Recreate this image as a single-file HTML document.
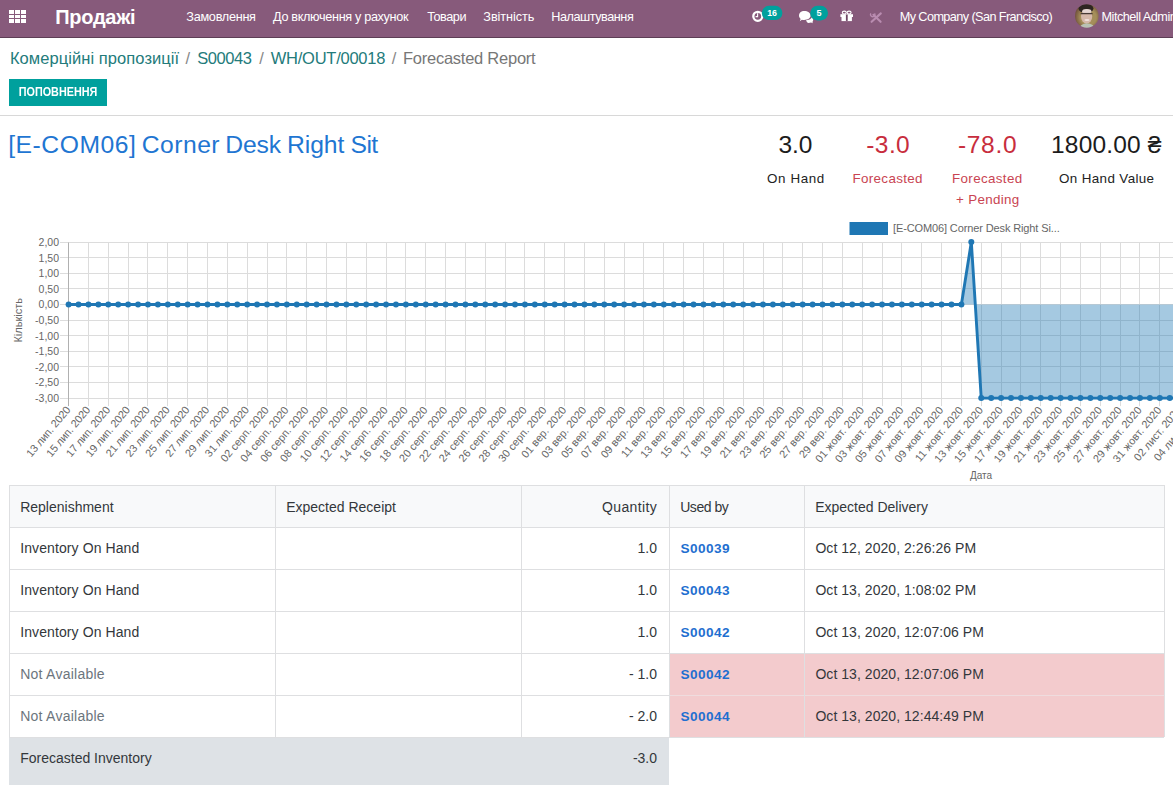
<!DOCTYPE html>
<html><head><meta charset="utf-8">
<style>
*{box-sizing:border-box;margin:0;padding:0}
html,body{width:1173px;height:785px;overflow:hidden;background:#fff;font-family:"Liberation Sans",sans-serif}
.t{position:absolute;white-space:nowrap}
.r{position:absolute}
</style></head><body>
<div class="r" style="left:0px;top:0px;width:1173px;height:37px;background:#875A7B;"></div>
<div class="r" style="left:0px;top:37px;width:1173px;height:1px;background:#5d3e55;"></div>
<div class="r" style="left:9.0px;top:10.3px;width:5.2px;height:3.8px;background:#fff;"></div>
<div class="r" style="left:14.8px;top:10.3px;width:5.2px;height:3.8px;background:#fff;"></div>
<div class="r" style="left:20.6px;top:10.3px;width:5.2px;height:3.8px;background:#fff;"></div>
<div class="r" style="left:9.0px;top:14.600000000000001px;width:5.2px;height:3.8px;background:#fff;"></div>
<div class="r" style="left:14.8px;top:14.600000000000001px;width:5.2px;height:3.8px;background:#fff;"></div>
<div class="r" style="left:20.6px;top:14.600000000000001px;width:5.2px;height:3.8px;background:#fff;"></div>
<div class="r" style="left:9.0px;top:18.9px;width:5.2px;height:3.8px;background:#fff;"></div>
<div class="r" style="left:14.8px;top:18.9px;width:5.2px;height:3.8px;background:#fff;"></div>
<div class="r" style="left:20.6px;top:18.9px;width:5.2px;height:3.8px;background:#fff;"></div>
<div class="t" style="top:6.60px;font-size:20px;line-height:20px;color:#fff;font-weight:bold;letter-spacing:-0.3px;left:55.30px;">Продажі</div>
<div class="t" style="top:11.31px;font-size:12.7px;line-height:12.7px;color:#fff;letter-spacing:-0.289px;left:186.30px;">Замовлення</div>
<div class="t" style="top:11.31px;font-size:12.7px;line-height:12.7px;color:#fff;letter-spacing:-0.343px;left:273.00px;">До включення у рахунок</div>
<div class="t" style="top:11.31px;font-size:12.7px;line-height:12.7px;color:#fff;letter-spacing:-0.46px;left:427.20px;">Товари</div>
<div class="t" style="top:11.31px;font-size:12.7px;line-height:12.7px;color:#fff;letter-spacing:-0.062px;left:483.30px;">Звітність</div>
<div class="t" style="top:11.31px;font-size:12.7px;line-height:12.7px;color:#fff;letter-spacing:-0.464px;left:551.20px;">Налаштування</div>
<div class="t" style="top:11.31px;font-size:12.7px;line-height:12.7px;color:#fff;letter-spacing:-0.592px;left:899.70px;">My Company (San Francisco)</div>
<div class="t" style="top:11.31px;font-size:12.7px;line-height:12.7px;color:#fff;letter-spacing:-0.5px;left:1101.50px;">Mitchell Admin</div>
<svg class="r" style="left:0;top:0" width="1173" height="38" viewBox="0 0 1173 38">
<circle cx="757.8" cy="16.3" r="4.5" fill="none" stroke="#fff" stroke-width="2.3"/>
<path d="M757.6,13.3 V16.6 H755.6" fill="none" stroke="#fff" stroke-width="1.1"/>
<rect x="761.8" y="5.8" width="20.6" height="14.2" rx="7.1" fill="#00A09D"/>
<text x="772.1" y="15.9" text-anchor="middle" font-family="Liberation Sans" font-weight="bold" font-size="8.8" fill="#fff">16</text>
<path d="M804.2,11 C807.8,11 810.6,13 810.6,15.6 C810.6,18.2 807.8,20 804.2,20 C803.3,20 802.6,19.9 801.9,19.7 L799.8,21.2 L800.6,18.9 C799.5,18 799,16.9 799,15.6 C799,13 801.1,11 804.2,11 Z" fill="#fff"/>
<path d="M806,20.3 C808.5,20.3 811,19 812,17.2 C812.8,18 813.2,19 813.2,20 C813.2,20.9 812.8,21.6 812.3,22.1 L813,23.2 L811,22.6 C810.3,22.9 809.5,23 808.6,23 C807.5,23 806.6,21.8 806,20.3 Z" fill="#fff"/>
<rect x="810.2" y="5.8" width="17.8" height="14.6" rx="7.3" fill="#00A09D"/>
<text x="819.1" y="16" text-anchor="middle" font-family="Liberation Sans" font-weight="bold" font-size="9" fill="#fff">5</text>
<ellipse cx="844.3" cy="12.6" rx="2" ry="1.5" fill="none" stroke="#fff" stroke-width="1.1"/>
<ellipse cx="849.1" cy="12.6" rx="2" ry="1.5" fill="none" stroke="#fff" stroke-width="1.1"/>
<rect x="840.4" y="14.2" width="12.6" height="2.8" fill="#fff"/>
<rect x="841.5" y="17" width="10.4" height="4.1" fill="#fff"/>
<rect x="845.9" y="14.6" width="1.8" height="6.3" fill="#6d4563"/>
<path d="M871.6,21.8 L880.8,13.4" stroke="#b98cb0" stroke-width="2.1" stroke-linecap="round"/>
<path d="M873.4,14.8 L880.6,21.8" stroke="#b98cb0" stroke-width="2.1" stroke-linecap="round"/>
<path d="M870.8,13.4 A2.2,2.2 0 1 0 874.6,13.4" fill="none" stroke="#b98cb0" stroke-width="1.4"/>
<defs>
<clipPath id="av"><circle cx="1086.8" cy="15.95" r="11.8"/></clipPath>
<radialGradient id="avbg" cx="0.55" cy="0.55" r="0.55"><stop offset="0.55" stop-color="#a58e5a"/><stop offset="1" stop-color="#6a4a38"/></radialGradient>
<filter id="avb" x="-10%" y="-10%" width="120%" height="120%"><feGaussianBlur stdDeviation="0.55"/></filter>
</defs>
<g clip-path="url(#av)"><g filter="url(#avb)">
<rect x="1074" y="3" width="26" height="26" fill="url(#avbg)"/>
<ellipse cx="1086" cy="8.5" rx="7.5" ry="4.5" fill="#2e2522"/>
<ellipse cx="1086.6" cy="16.5" rx="5.6" ry="7.2" fill="#d6b8aa"/>
<ellipse cx="1086.8" cy="11.2" rx="4.6" ry="2.2" fill="#e6d6d2"/>
<path d="M1080.6,13.6 H1092.6" stroke="#4a3a34" stroke-width="1.3"/>
<ellipse cx="1087" cy="20" rx="2.6" ry="1.1" fill="#f0e0dc"/>
<path d="M1079,29 C1080,25 1083,23.6 1087,23.6 C1091,23.6 1094,25 1095,29 Z" fill="#b9c2b4"/>
</g></g>
</svg>
<div class="t" style="top:49.98px;font-size:16.5px;line-height:16.5px;color:#237b7b;letter-spacing:0.07px;left:9.90px;">Комерційні пропозиції</div>
<div class="t" style="top:49.98px;font-size:16.5px;line-height:16.5px;color:#888;left:185.50px;">/</div>
<div class="t" style="top:49.98px;font-size:16.5px;line-height:16.5px;color:#237b7b;letter-spacing:-0.44px;left:197.20px;">S00043</div>
<div class="t" style="top:49.98px;font-size:16.5px;line-height:16.5px;color:#888;left:259.20px;">/</div>
<div class="t" style="top:49.98px;font-size:16.5px;line-height:16.5px;color:#237b7b;letter-spacing:-0.255px;left:270.80px;">WH/OUT/00018</div>
<div class="t" style="top:49.98px;font-size:16.5px;line-height:16.5px;color:#888;left:391.70px;">/</div>
<div class="t" style="top:49.98px;font-size:16.5px;line-height:16.5px;color:#777;letter-spacing:-0.25px;left:403.00px;">Forecasted Report</div>
<div class="r" style="left:9px;top:79px;width:98px;height:27px;background:#00A09D;"></div>
<div class="t" style="top:84.98px;font-size:13.2px;line-height:13.2px;color:#fff;font-weight:bold;left:-241.90px;width:600px;text-align:center;transform:scaleX(0.82);">ПОПОВНЕННЯ</div>
<div class="r" style="left:0px;top:115px;width:1173px;height:1px;background:#d8d8d8;"></div>
<div class="t" style="top:132.91px;font-size:24.7px;line-height:24.7px;color:#1f76d2;letter-spacing:0.538px;left:8.20px;">[E-COM06]</div>
<div class="t" style="top:132.91px;font-size:24.7px;line-height:24.7px;color:#1f76d2;letter-spacing:0.46px;left:141.80px;">Corner</div>
<div class="t" style="top:132.91px;font-size:24.7px;line-height:24.7px;color:#1f76d2;letter-spacing:-0.167px;left:225.30px;">Desk</div>
<div class="t" style="top:132.91px;font-size:24.7px;line-height:24.7px;color:#1f76d2;letter-spacing:-0.075px;left:287.00px;">Right</div>
<div class="t" style="top:132.91px;font-size:24.7px;line-height:24.7px;color:#1f76d2;letter-spacing:-0.6px;left:350.60px;">Sit</div>
<div class="t" style="top:132.98px;font-size:24.5px;line-height:24.5px;color:#1c1c1c;letter-spacing:-0.1px;left:778.60px;">3.0</div>
<div class="t" style="top:132.98px;font-size:24.5px;line-height:24.5px;color:#c82d3d;letter-spacing:0.4px;left:866.30px;">-3.0</div>
<div class="t" style="top:132.98px;font-size:24.5px;line-height:24.5px;color:#c82d3d;letter-spacing:0.7px;left:957.90px;">-78.0</div>
<div class="t" style="top:132.98px;font-size:24.5px;line-height:24.5px;color:#1c1c1c;letter-spacing:0.188px;left:1051.00px;">1800.00 ₴</div>
<div class="t" style="top:171.91px;font-size:13.4px;line-height:13.4px;color:#222;letter-spacing:0.6px;left:767.00px;">On Hand</div>
<div class="t" style="top:171.91px;font-size:13.4px;line-height:13.4px;color:#c94452;letter-spacing:0.311px;left:852.60px;">Forecasted</div>
<div class="t" style="top:171.91px;font-size:13.4px;line-height:13.4px;color:#c94452;letter-spacing:0.356px;left:952.00px;">Forecasted</div>
<div class="t" style="top:192.61px;font-size:13.4px;line-height:13.4px;color:#c94452;letter-spacing:0.312px;left:956.00px;">+ Pending</div>
<div class="t" style="top:171.91px;font-size:13.4px;line-height:13.4px;color:#222;letter-spacing:0.375px;left:1059.00px;">On Hand Value</div>
<svg class="r" style="left:0;top:0" width="1173" height="785" viewBox="0 0 1173 785" font-family="Liberation Sans">
<line x1="60" y1="242.50" x2="1200" y2="242.50" stroke="#dcdcdc" stroke-width="1"/>
<line x1="60" y1="257.50" x2="1200" y2="257.50" stroke="#dcdcdc" stroke-width="1"/>
<line x1="60" y1="273.50" x2="1200" y2="273.50" stroke="#dcdcdc" stroke-width="1"/>
<line x1="60" y1="288.50" x2="1200" y2="288.50" stroke="#dcdcdc" stroke-width="1"/>
<line x1="60" y1="304.50" x2="1200" y2="304.50" stroke="#dcdcdc" stroke-width="1"/>
<line x1="60" y1="320.50" x2="1200" y2="320.50" stroke="#dcdcdc" stroke-width="1"/>
<line x1="60" y1="335.50" x2="1200" y2="335.50" stroke="#dcdcdc" stroke-width="1"/>
<line x1="60" y1="351.50" x2="1200" y2="351.50" stroke="#dcdcdc" stroke-width="1"/>
<line x1="60" y1="366.50" x2="1200" y2="366.50" stroke="#dcdcdc" stroke-width="1"/>
<line x1="60" y1="382.50" x2="1200" y2="382.50" stroke="#dcdcdc" stroke-width="1"/>
<line x1="60" y1="398.50" x2="1200" y2="398.50" stroke="#dcdcdc" stroke-width="1"/>
<line x1="68.50" y1="242.50" x2="68.50" y2="406.10" stroke="#b0b0b0" stroke-width="1"/>
<line x1="88.50" y1="242.50" x2="88.50" y2="406.10" stroke="#dcdcdc" stroke-width="1"/>
<line x1="108.50" y1="242.50" x2="108.50" y2="406.10" stroke="#dcdcdc" stroke-width="1"/>
<line x1="128.50" y1="242.50" x2="128.50" y2="406.10" stroke="#dcdcdc" stroke-width="1"/>
<line x1="147.50" y1="242.50" x2="147.50" y2="406.10" stroke="#dcdcdc" stroke-width="1"/>
<line x1="167.50" y1="242.50" x2="167.50" y2="406.10" stroke="#dcdcdc" stroke-width="1"/>
<line x1="187.50" y1="242.50" x2="187.50" y2="406.10" stroke="#dcdcdc" stroke-width="1"/>
<line x1="207.50" y1="242.50" x2="207.50" y2="406.10" stroke="#dcdcdc" stroke-width="1"/>
<line x1="227.50" y1="242.50" x2="227.50" y2="406.10" stroke="#dcdcdc" stroke-width="1"/>
<line x1="247.50" y1="242.50" x2="247.50" y2="406.10" stroke="#dcdcdc" stroke-width="1"/>
<line x1="267.50" y1="242.50" x2="267.50" y2="406.10" stroke="#dcdcdc" stroke-width="1"/>
<line x1="286.50" y1="242.50" x2="286.50" y2="406.10" stroke="#dcdcdc" stroke-width="1"/>
<line x1="306.50" y1="242.50" x2="306.50" y2="406.10" stroke="#dcdcdc" stroke-width="1"/>
<line x1="326.50" y1="242.50" x2="326.50" y2="406.10" stroke="#dcdcdc" stroke-width="1"/>
<line x1="346.50" y1="242.50" x2="346.50" y2="406.10" stroke="#dcdcdc" stroke-width="1"/>
<line x1="366.50" y1="242.50" x2="366.50" y2="406.10" stroke="#dcdcdc" stroke-width="1"/>
<line x1="386.50" y1="242.50" x2="386.50" y2="406.10" stroke="#dcdcdc" stroke-width="1"/>
<line x1="405.50" y1="242.50" x2="405.50" y2="406.10" stroke="#dcdcdc" stroke-width="1"/>
<line x1="425.50" y1="242.50" x2="425.50" y2="406.10" stroke="#dcdcdc" stroke-width="1"/>
<line x1="445.50" y1="242.50" x2="445.50" y2="406.10" stroke="#dcdcdc" stroke-width="1"/>
<line x1="465.50" y1="242.50" x2="465.50" y2="406.10" stroke="#dcdcdc" stroke-width="1"/>
<line x1="485.50" y1="242.50" x2="485.50" y2="406.10" stroke="#dcdcdc" stroke-width="1"/>
<line x1="505.50" y1="242.50" x2="505.50" y2="406.10" stroke="#dcdcdc" stroke-width="1"/>
<line x1="524.50" y1="242.50" x2="524.50" y2="406.10" stroke="#dcdcdc" stroke-width="1"/>
<line x1="544.50" y1="242.50" x2="544.50" y2="406.10" stroke="#dcdcdc" stroke-width="1"/>
<line x1="564.50" y1="242.50" x2="564.50" y2="406.10" stroke="#dcdcdc" stroke-width="1"/>
<line x1="584.50" y1="242.50" x2="584.50" y2="406.10" stroke="#dcdcdc" stroke-width="1"/>
<line x1="604.50" y1="242.50" x2="604.50" y2="406.10" stroke="#dcdcdc" stroke-width="1"/>
<line x1="624.50" y1="242.50" x2="624.50" y2="406.10" stroke="#dcdcdc" stroke-width="1"/>
<line x1="643.50" y1="242.50" x2="643.50" y2="406.10" stroke="#dcdcdc" stroke-width="1"/>
<line x1="663.50" y1="242.50" x2="663.50" y2="406.10" stroke="#dcdcdc" stroke-width="1"/>
<line x1="683.50" y1="242.50" x2="683.50" y2="406.10" stroke="#dcdcdc" stroke-width="1"/>
<line x1="703.50" y1="242.50" x2="703.50" y2="406.10" stroke="#dcdcdc" stroke-width="1"/>
<line x1="723.50" y1="242.50" x2="723.50" y2="406.10" stroke="#dcdcdc" stroke-width="1"/>
<line x1="743.50" y1="242.50" x2="743.50" y2="406.10" stroke="#dcdcdc" stroke-width="1"/>
<line x1="763.50" y1="242.50" x2="763.50" y2="406.10" stroke="#dcdcdc" stroke-width="1"/>
<line x1="782.50" y1="242.50" x2="782.50" y2="406.10" stroke="#dcdcdc" stroke-width="1"/>
<line x1="802.50" y1="242.50" x2="802.50" y2="406.10" stroke="#dcdcdc" stroke-width="1"/>
<line x1="822.50" y1="242.50" x2="822.50" y2="406.10" stroke="#dcdcdc" stroke-width="1"/>
<line x1="842.50" y1="242.50" x2="842.50" y2="406.10" stroke="#dcdcdc" stroke-width="1"/>
<line x1="862.50" y1="242.50" x2="862.50" y2="406.10" stroke="#dcdcdc" stroke-width="1"/>
<line x1="882.50" y1="242.50" x2="882.50" y2="406.10" stroke="#dcdcdc" stroke-width="1"/>
<line x1="901.50" y1="242.50" x2="901.50" y2="406.10" stroke="#dcdcdc" stroke-width="1"/>
<line x1="921.50" y1="242.50" x2="921.50" y2="406.10" stroke="#dcdcdc" stroke-width="1"/>
<line x1="941.50" y1="242.50" x2="941.50" y2="406.10" stroke="#dcdcdc" stroke-width="1"/>
<line x1="961.50" y1="242.50" x2="961.50" y2="406.10" stroke="#dcdcdc" stroke-width="1"/>
<line x1="981.50" y1="242.50" x2="981.50" y2="406.10" stroke="#dcdcdc" stroke-width="1"/>
<line x1="1001.50" y1="242.50" x2="1001.50" y2="406.10" stroke="#dcdcdc" stroke-width="1"/>
<line x1="1020.50" y1="242.50" x2="1020.50" y2="406.10" stroke="#dcdcdc" stroke-width="1"/>
<line x1="1040.50" y1="242.50" x2="1040.50" y2="406.10" stroke="#dcdcdc" stroke-width="1"/>
<line x1="1060.50" y1="242.50" x2="1060.50" y2="406.10" stroke="#dcdcdc" stroke-width="1"/>
<line x1="1080.50" y1="242.50" x2="1080.50" y2="406.10" stroke="#dcdcdc" stroke-width="1"/>
<line x1="1100.50" y1="242.50" x2="1100.50" y2="406.10" stroke="#dcdcdc" stroke-width="1"/>
<line x1="1120.50" y1="242.50" x2="1120.50" y2="406.10" stroke="#dcdcdc" stroke-width="1"/>
<line x1="1139.50" y1="242.50" x2="1139.50" y2="406.10" stroke="#dcdcdc" stroke-width="1"/>
<line x1="1159.50" y1="242.50" x2="1159.50" y2="406.10" stroke="#dcdcdc" stroke-width="1"/>
<line x1="1179.50" y1="242.50" x2="1179.50" y2="406.10" stroke="#dcdcdc" stroke-width="1"/>
<text x="59" y="245.90" text-anchor="end" font-size="10.5" fill="#666">2,00</text>
<text x="59" y="261.50" text-anchor="end" font-size="10.5" fill="#666">1,50</text>
<text x="59" y="277.10" text-anchor="end" font-size="10.5" fill="#666">1,00</text>
<text x="59" y="292.70" text-anchor="end" font-size="10.5" fill="#666">0,50</text>
<text x="59" y="308.30" text-anchor="end" font-size="10.5" fill="#666">0,00</text>
<text x="59" y="323.90" text-anchor="end" font-size="10.5" fill="#666">-0,50</text>
<text x="59" y="339.50" text-anchor="end" font-size="10.5" fill="#666">-1,00</text>
<text x="59" y="355.10" text-anchor="end" font-size="10.5" fill="#666">-1,50</text>
<text x="59" y="370.70" text-anchor="end" font-size="10.5" fill="#666">-2,00</text>
<text x="59" y="386.30" text-anchor="end" font-size="10.5" fill="#666">-2,50</text>
<text x="59" y="401.90" text-anchor="end" font-size="10.5" fill="#666">-3,00</text>
<text transform="translate(68.00,407.8) rotate(-50)" text-anchor="end" y="3.9" font-size="10.8" letter-spacing="-0.12" fill="#666">13 лип. 2020</text>
<text transform="translate(87.84,407.8) rotate(-50)" text-anchor="end" y="3.9" font-size="10.8" letter-spacing="-0.12" fill="#666">15 лип. 2020</text>
<text transform="translate(107.68,407.8) rotate(-50)" text-anchor="end" y="3.9" font-size="10.8" letter-spacing="-0.12" fill="#666">17 лип. 2020</text>
<text transform="translate(127.52,407.8) rotate(-50)" text-anchor="end" y="3.9" font-size="10.8" letter-spacing="-0.12" fill="#666">19 лип. 2020</text>
<text transform="translate(147.36,407.8) rotate(-50)" text-anchor="end" y="3.9" font-size="10.8" letter-spacing="-0.12" fill="#666">21 лип. 2020</text>
<text transform="translate(167.20,407.8) rotate(-50)" text-anchor="end" y="3.9" font-size="10.8" letter-spacing="-0.12" fill="#666">23 лип. 2020</text>
<text transform="translate(187.04,407.8) rotate(-50)" text-anchor="end" y="3.9" font-size="10.8" letter-spacing="-0.12" fill="#666">25 лип. 2020</text>
<text transform="translate(206.88,407.8) rotate(-50)" text-anchor="end" y="3.9" font-size="10.8" letter-spacing="-0.12" fill="#666">27 лип. 2020</text>
<text transform="translate(226.72,407.8) rotate(-50)" text-anchor="end" y="3.9" font-size="10.8" letter-spacing="-0.12" fill="#666">29 лип. 2020</text>
<text transform="translate(246.56,407.8) rotate(-50)" text-anchor="end" y="3.9" font-size="10.8" letter-spacing="-0.12" fill="#666">31 лип. 2020</text>
<text transform="translate(266.40,407.8) rotate(-50)" text-anchor="end" y="3.9" font-size="10.8" letter-spacing="0.0" fill="#666">02 серп. 2020</text>
<text transform="translate(286.24,407.8) rotate(-50)" text-anchor="end" y="3.9" font-size="10.8" letter-spacing="0.0" fill="#666">04 серп. 2020</text>
<text transform="translate(306.08,407.8) rotate(-50)" text-anchor="end" y="3.9" font-size="10.8" letter-spacing="0.0" fill="#666">06 серп. 2020</text>
<text transform="translate(325.92,407.8) rotate(-50)" text-anchor="end" y="3.9" font-size="10.8" letter-spacing="0.0" fill="#666">08 серп. 2020</text>
<text transform="translate(345.76,407.8) rotate(-50)" text-anchor="end" y="3.9" font-size="10.8" letter-spacing="0.0" fill="#666">10 серп. 2020</text>
<text transform="translate(365.60,407.8) rotate(-50)" text-anchor="end" y="3.9" font-size="10.8" letter-spacing="0.0" fill="#666">12 серп. 2020</text>
<text transform="translate(385.44,407.8) rotate(-50)" text-anchor="end" y="3.9" font-size="10.8" letter-spacing="0.0" fill="#666">14 серп. 2020</text>
<text transform="translate(405.28,407.8) rotate(-50)" text-anchor="end" y="3.9" font-size="10.8" letter-spacing="0.0" fill="#666">16 серп. 2020</text>
<text transform="translate(425.12,407.8) rotate(-50)" text-anchor="end" y="3.9" font-size="10.8" letter-spacing="0.0" fill="#666">18 серп. 2020</text>
<text transform="translate(444.96,407.8) rotate(-50)" text-anchor="end" y="3.9" font-size="10.8" letter-spacing="0.0" fill="#666">20 серп. 2020</text>
<text transform="translate(464.80,407.8) rotate(-50)" text-anchor="end" y="3.9" font-size="10.8" letter-spacing="0.0" fill="#666">22 серп. 2020</text>
<text transform="translate(484.64,407.8) rotate(-50)" text-anchor="end" y="3.9" font-size="10.8" letter-spacing="0.0" fill="#666">24 серп. 2020</text>
<text transform="translate(504.48,407.8) rotate(-50)" text-anchor="end" y="3.9" font-size="10.8" letter-spacing="0.0" fill="#666">26 серп. 2020</text>
<text transform="translate(524.32,407.8) rotate(-50)" text-anchor="end" y="3.9" font-size="10.8" letter-spacing="0.0" fill="#666">28 серп. 2020</text>
<text transform="translate(544.16,407.8) rotate(-50)" text-anchor="end" y="3.9" font-size="10.8" letter-spacing="0.0" fill="#666">30 серп. 2020</text>
<text transform="translate(564.00,407.8) rotate(-50)" text-anchor="end" y="3.9" font-size="10.8" letter-spacing="0.05" fill="#666">01 вер. 2020</text>
<text transform="translate(583.84,407.8) rotate(-50)" text-anchor="end" y="3.9" font-size="10.8" letter-spacing="0.05" fill="#666">03 вер. 2020</text>
<text transform="translate(603.68,407.8) rotate(-50)" text-anchor="end" y="3.9" font-size="10.8" letter-spacing="0.05" fill="#666">05 вер. 2020</text>
<text transform="translate(623.52,407.8) rotate(-50)" text-anchor="end" y="3.9" font-size="10.8" letter-spacing="0.05" fill="#666">07 вер. 2020</text>
<text transform="translate(643.36,407.8) rotate(-50)" text-anchor="end" y="3.9" font-size="10.8" letter-spacing="0.05" fill="#666">09 вер. 2020</text>
<text transform="translate(663.20,407.8) rotate(-50)" text-anchor="end" y="3.9" font-size="10.8" letter-spacing="0.05" fill="#666">11 вер. 2020</text>
<text transform="translate(683.04,407.8) rotate(-50)" text-anchor="end" y="3.9" font-size="10.8" letter-spacing="0.05" fill="#666">13 вер. 2020</text>
<text transform="translate(702.88,407.8) rotate(-50)" text-anchor="end" y="3.9" font-size="10.8" letter-spacing="0.05" fill="#666">15 вер. 2020</text>
<text transform="translate(722.72,407.8) rotate(-50)" text-anchor="end" y="3.9" font-size="10.8" letter-spacing="0.05" fill="#666">17 вер. 2020</text>
<text transform="translate(742.56,407.8) rotate(-50)" text-anchor="end" y="3.9" font-size="10.8" letter-spacing="0.05" fill="#666">19 вер. 2020</text>
<text transform="translate(762.40,407.8) rotate(-50)" text-anchor="end" y="3.9" font-size="10.8" letter-spacing="0.05" fill="#666">21 вер. 2020</text>
<text transform="translate(782.24,407.8) rotate(-50)" text-anchor="end" y="3.9" font-size="10.8" letter-spacing="0.05" fill="#666">23 вер. 2020</text>
<text transform="translate(802.08,407.8) rotate(-50)" text-anchor="end" y="3.9" font-size="10.8" letter-spacing="0.05" fill="#666">25 вер. 2020</text>
<text transform="translate(821.92,407.8) rotate(-50)" text-anchor="end" y="3.9" font-size="10.8" letter-spacing="0.05" fill="#666">27 вер. 2020</text>
<text transform="translate(841.76,407.8) rotate(-50)" text-anchor="end" y="3.9" font-size="10.8" letter-spacing="0.05" fill="#666">29 вер. 2020</text>
<text transform="translate(861.60,407.8) rotate(-50)" text-anchor="end" y="3.9" font-size="10.8" letter-spacing="0.12" fill="#666">01 жовт. 2020</text>
<text transform="translate(881.44,407.8) rotate(-50)" text-anchor="end" y="3.9" font-size="10.8" letter-spacing="0.12" fill="#666">03 жовт. 2020</text>
<text transform="translate(901.28,407.8) rotate(-50)" text-anchor="end" y="3.9" font-size="10.8" letter-spacing="0.12" fill="#666">05 жовт. 2020</text>
<text transform="translate(921.12,407.8) rotate(-50)" text-anchor="end" y="3.9" font-size="10.8" letter-spacing="0.12" fill="#666">07 жовт. 2020</text>
<text transform="translate(940.96,407.8) rotate(-50)" text-anchor="end" y="3.9" font-size="10.8" letter-spacing="0.12" fill="#666">09 жовт. 2020</text>
<text transform="translate(960.80,407.8) rotate(-50)" text-anchor="end" y="3.9" font-size="10.8" letter-spacing="0.12" fill="#666">11 жовт. 2020</text>
<text transform="translate(980.64,407.8) rotate(-50)" text-anchor="end" y="3.9" font-size="10.8" letter-spacing="0.12" fill="#666">13 жовт. 2020</text>
<text transform="translate(1000.48,407.8) rotate(-50)" text-anchor="end" y="3.9" font-size="10.8" letter-spacing="0.12" fill="#666">15 жовт. 2020</text>
<text transform="translate(1020.32,407.8) rotate(-50)" text-anchor="end" y="3.9" font-size="10.8" letter-spacing="0.12" fill="#666">17 жовт. 2020</text>
<text transform="translate(1040.16,407.8) rotate(-50)" text-anchor="end" y="3.9" font-size="10.8" letter-spacing="0.12" fill="#666">19 жовт. 2020</text>
<text transform="translate(1060.00,407.8) rotate(-50)" text-anchor="end" y="3.9" font-size="10.8" letter-spacing="0.12" fill="#666">21 жовт. 2020</text>
<text transform="translate(1079.84,407.8) rotate(-50)" text-anchor="end" y="3.9" font-size="10.8" letter-spacing="0.12" fill="#666">23 жовт. 2020</text>
<text transform="translate(1099.68,407.8) rotate(-50)" text-anchor="end" y="3.9" font-size="10.8" letter-spacing="0.12" fill="#666">25 жовт. 2020</text>
<text transform="translate(1119.52,407.8) rotate(-50)" text-anchor="end" y="3.9" font-size="10.8" letter-spacing="0.12" fill="#666">27 жовт. 2020</text>
<text transform="translate(1139.36,407.8) rotate(-50)" text-anchor="end" y="3.9" font-size="10.8" letter-spacing="0.12" fill="#666">29 жовт. 2020</text>
<text transform="translate(1159.20,407.8) rotate(-50)" text-anchor="end" y="3.9" font-size="10.8" letter-spacing="0.12" fill="#666">31 жовт. 2020</text>
<text transform="translate(1179.04,407.8) rotate(-50)" text-anchor="end" y="3.9" font-size="10.8" letter-spacing="0.05" fill="#666">02 лист. 2020</text>
<text transform="translate(1198.88,407.8) rotate(-50)" text-anchor="end" y="3.9" font-size="10.8" letter-spacing="0.05" fill="#666">04 лист. 2020</text>
<text transform="translate(1218.72,407.8) rotate(-50)" text-anchor="end" y="3.9" font-size="10.8" letter-spacing="0.05" fill="#666">06 лист. 2020</text>
<path d="M68.60,304.5 L68.60,304.50 L78.52,304.50 L88.44,304.50 L98.36,304.50 L108.28,304.50 L118.20,304.50 L128.12,304.50 L138.04,304.50 L147.96,304.50 L157.88,304.50 L167.80,304.50 L177.72,304.50 L187.64,304.50 L197.56,304.50 L207.48,304.50 L217.40,304.50 L227.32,304.50 L237.24,304.50 L247.16,304.50 L257.08,304.50 L267.00,304.50 L276.92,304.50 L286.84,304.50 L296.76,304.50 L306.68,304.50 L316.60,304.50 L326.52,304.50 L336.44,304.50 L346.36,304.50 L356.28,304.50 L366.20,304.50 L376.12,304.50 L386.04,304.50 L395.96,304.50 L405.88,304.50 L415.80,304.50 L425.72,304.50 L435.64,304.50 L445.56,304.50 L455.48,304.50 L465.40,304.50 L475.32,304.50 L485.24,304.50 L495.16,304.50 L505.08,304.50 L515.00,304.50 L524.92,304.50 L534.84,304.50 L544.76,304.50 L554.68,304.50 L564.60,304.50 L574.52,304.50 L584.44,304.50 L594.36,304.50 L604.28,304.50 L614.20,304.50 L624.12,304.50 L634.04,304.50 L643.96,304.50 L653.88,304.50 L663.80,304.50 L673.72,304.50 L683.64,304.50 L693.56,304.50 L703.48,304.50 L713.40,304.50 L723.32,304.50 L733.24,304.50 L743.16,304.50 L753.08,304.50 L763.00,304.50 L772.92,304.50 L782.84,304.50 L792.76,304.50 L802.68,304.50 L812.60,304.50 L822.52,304.50 L832.44,304.50 L842.36,304.50 L852.28,304.50 L862.20,304.50 L872.12,304.50 L882.04,304.50 L891.96,304.50 L901.88,304.50 L911.80,304.50 L921.72,304.50 L931.64,304.50 L941.56,304.50 L951.48,304.50 L961.40,304.50 L971.32,242.10 L981.24,398.10 L991.16,398.10 L1001.08,398.10 L1011.00,398.10 L1020.92,398.10 L1030.84,398.10 L1040.76,398.10 L1050.68,398.10 L1060.60,398.10 L1070.52,398.10 L1080.44,398.10 L1090.36,398.10 L1100.28,398.10 L1110.20,398.10 L1120.12,398.10 L1130.04,398.10 L1139.96,398.10 L1149.88,398.10 L1159.80,398.10 L1169.72,398.10 L1179.64,398.10 L1189.56,398.10 L1199.48,398.10 L1209.40,398.10 L1219.32,398.10 L1229.24,398.10 L1229.24,304.5 Z" fill="rgba(31,119,180,0.4)"/>
<path d="M68.60,304.50 L78.52,304.50 L88.44,304.50 L98.36,304.50 L108.28,304.50 L118.20,304.50 L128.12,304.50 L138.04,304.50 L147.96,304.50 L157.88,304.50 L167.80,304.50 L177.72,304.50 L187.64,304.50 L197.56,304.50 L207.48,304.50 L217.40,304.50 L227.32,304.50 L237.24,304.50 L247.16,304.50 L257.08,304.50 L267.00,304.50 L276.92,304.50 L286.84,304.50 L296.76,304.50 L306.68,304.50 L316.60,304.50 L326.52,304.50 L336.44,304.50 L346.36,304.50 L356.28,304.50 L366.20,304.50 L376.12,304.50 L386.04,304.50 L395.96,304.50 L405.88,304.50 L415.80,304.50 L425.72,304.50 L435.64,304.50 L445.56,304.50 L455.48,304.50 L465.40,304.50 L475.32,304.50 L485.24,304.50 L495.16,304.50 L505.08,304.50 L515.00,304.50 L524.92,304.50 L534.84,304.50 L544.76,304.50 L554.68,304.50 L564.60,304.50 L574.52,304.50 L584.44,304.50 L594.36,304.50 L604.28,304.50 L614.20,304.50 L624.12,304.50 L634.04,304.50 L643.96,304.50 L653.88,304.50 L663.80,304.50 L673.72,304.50 L683.64,304.50 L693.56,304.50 L703.48,304.50 L713.40,304.50 L723.32,304.50 L733.24,304.50 L743.16,304.50 L753.08,304.50 L763.00,304.50 L772.92,304.50 L782.84,304.50 L792.76,304.50 L802.68,304.50 L812.60,304.50 L822.52,304.50 L832.44,304.50 L842.36,304.50 L852.28,304.50 L862.20,304.50 L872.12,304.50 L882.04,304.50 L891.96,304.50 L901.88,304.50 L911.80,304.50 L921.72,304.50 L931.64,304.50 L941.56,304.50 L951.48,304.50 L961.40,304.50 L971.32,242.10 L981.24,398.10 L991.16,398.10 L1001.08,398.10 L1011.00,398.10 L1020.92,398.10 L1030.84,398.10 L1040.76,398.10 L1050.68,398.10 L1060.60,398.10 L1070.52,398.10 L1080.44,398.10 L1090.36,398.10 L1100.28,398.10 L1110.20,398.10 L1120.12,398.10 L1130.04,398.10 L1139.96,398.10 L1149.88,398.10 L1159.80,398.10 L1169.72,398.10 L1179.64,398.10 L1189.56,398.10 L1199.48,398.10 L1209.40,398.10 L1219.32,398.10 L1229.24,398.10" fill="none" stroke="#1f77b4" stroke-width="2.9"/>
<circle cx="68.60" cy="304.50" r="3" fill="#1f77b4"/>
<circle cx="78.52" cy="304.50" r="3" fill="#1f77b4"/>
<circle cx="88.44" cy="304.50" r="3" fill="#1f77b4"/>
<circle cx="98.36" cy="304.50" r="3" fill="#1f77b4"/>
<circle cx="108.28" cy="304.50" r="3" fill="#1f77b4"/>
<circle cx="118.20" cy="304.50" r="3" fill="#1f77b4"/>
<circle cx="128.12" cy="304.50" r="3" fill="#1f77b4"/>
<circle cx="138.04" cy="304.50" r="3" fill="#1f77b4"/>
<circle cx="147.96" cy="304.50" r="3" fill="#1f77b4"/>
<circle cx="157.88" cy="304.50" r="3" fill="#1f77b4"/>
<circle cx="167.80" cy="304.50" r="3" fill="#1f77b4"/>
<circle cx="177.72" cy="304.50" r="3" fill="#1f77b4"/>
<circle cx="187.64" cy="304.50" r="3" fill="#1f77b4"/>
<circle cx="197.56" cy="304.50" r="3" fill="#1f77b4"/>
<circle cx="207.48" cy="304.50" r="3" fill="#1f77b4"/>
<circle cx="217.40" cy="304.50" r="3" fill="#1f77b4"/>
<circle cx="227.32" cy="304.50" r="3" fill="#1f77b4"/>
<circle cx="237.24" cy="304.50" r="3" fill="#1f77b4"/>
<circle cx="247.16" cy="304.50" r="3" fill="#1f77b4"/>
<circle cx="257.08" cy="304.50" r="3" fill="#1f77b4"/>
<circle cx="267.00" cy="304.50" r="3" fill="#1f77b4"/>
<circle cx="276.92" cy="304.50" r="3" fill="#1f77b4"/>
<circle cx="286.84" cy="304.50" r="3" fill="#1f77b4"/>
<circle cx="296.76" cy="304.50" r="3" fill="#1f77b4"/>
<circle cx="306.68" cy="304.50" r="3" fill="#1f77b4"/>
<circle cx="316.60" cy="304.50" r="3" fill="#1f77b4"/>
<circle cx="326.52" cy="304.50" r="3" fill="#1f77b4"/>
<circle cx="336.44" cy="304.50" r="3" fill="#1f77b4"/>
<circle cx="346.36" cy="304.50" r="3" fill="#1f77b4"/>
<circle cx="356.28" cy="304.50" r="3" fill="#1f77b4"/>
<circle cx="366.20" cy="304.50" r="3" fill="#1f77b4"/>
<circle cx="376.12" cy="304.50" r="3" fill="#1f77b4"/>
<circle cx="386.04" cy="304.50" r="3" fill="#1f77b4"/>
<circle cx="395.96" cy="304.50" r="3" fill="#1f77b4"/>
<circle cx="405.88" cy="304.50" r="3" fill="#1f77b4"/>
<circle cx="415.80" cy="304.50" r="3" fill="#1f77b4"/>
<circle cx="425.72" cy="304.50" r="3" fill="#1f77b4"/>
<circle cx="435.64" cy="304.50" r="3" fill="#1f77b4"/>
<circle cx="445.56" cy="304.50" r="3" fill="#1f77b4"/>
<circle cx="455.48" cy="304.50" r="3" fill="#1f77b4"/>
<circle cx="465.40" cy="304.50" r="3" fill="#1f77b4"/>
<circle cx="475.32" cy="304.50" r="3" fill="#1f77b4"/>
<circle cx="485.24" cy="304.50" r="3" fill="#1f77b4"/>
<circle cx="495.16" cy="304.50" r="3" fill="#1f77b4"/>
<circle cx="505.08" cy="304.50" r="3" fill="#1f77b4"/>
<circle cx="515.00" cy="304.50" r="3" fill="#1f77b4"/>
<circle cx="524.92" cy="304.50" r="3" fill="#1f77b4"/>
<circle cx="534.84" cy="304.50" r="3" fill="#1f77b4"/>
<circle cx="544.76" cy="304.50" r="3" fill="#1f77b4"/>
<circle cx="554.68" cy="304.50" r="3" fill="#1f77b4"/>
<circle cx="564.60" cy="304.50" r="3" fill="#1f77b4"/>
<circle cx="574.52" cy="304.50" r="3" fill="#1f77b4"/>
<circle cx="584.44" cy="304.50" r="3" fill="#1f77b4"/>
<circle cx="594.36" cy="304.50" r="3" fill="#1f77b4"/>
<circle cx="604.28" cy="304.50" r="3" fill="#1f77b4"/>
<circle cx="614.20" cy="304.50" r="3" fill="#1f77b4"/>
<circle cx="624.12" cy="304.50" r="3" fill="#1f77b4"/>
<circle cx="634.04" cy="304.50" r="3" fill="#1f77b4"/>
<circle cx="643.96" cy="304.50" r="3" fill="#1f77b4"/>
<circle cx="653.88" cy="304.50" r="3" fill="#1f77b4"/>
<circle cx="663.80" cy="304.50" r="3" fill="#1f77b4"/>
<circle cx="673.72" cy="304.50" r="3" fill="#1f77b4"/>
<circle cx="683.64" cy="304.50" r="3" fill="#1f77b4"/>
<circle cx="693.56" cy="304.50" r="3" fill="#1f77b4"/>
<circle cx="703.48" cy="304.50" r="3" fill="#1f77b4"/>
<circle cx="713.40" cy="304.50" r="3" fill="#1f77b4"/>
<circle cx="723.32" cy="304.50" r="3" fill="#1f77b4"/>
<circle cx="733.24" cy="304.50" r="3" fill="#1f77b4"/>
<circle cx="743.16" cy="304.50" r="3" fill="#1f77b4"/>
<circle cx="753.08" cy="304.50" r="3" fill="#1f77b4"/>
<circle cx="763.00" cy="304.50" r="3" fill="#1f77b4"/>
<circle cx="772.92" cy="304.50" r="3" fill="#1f77b4"/>
<circle cx="782.84" cy="304.50" r="3" fill="#1f77b4"/>
<circle cx="792.76" cy="304.50" r="3" fill="#1f77b4"/>
<circle cx="802.68" cy="304.50" r="3" fill="#1f77b4"/>
<circle cx="812.60" cy="304.50" r="3" fill="#1f77b4"/>
<circle cx="822.52" cy="304.50" r="3" fill="#1f77b4"/>
<circle cx="832.44" cy="304.50" r="3" fill="#1f77b4"/>
<circle cx="842.36" cy="304.50" r="3" fill="#1f77b4"/>
<circle cx="852.28" cy="304.50" r="3" fill="#1f77b4"/>
<circle cx="862.20" cy="304.50" r="3" fill="#1f77b4"/>
<circle cx="872.12" cy="304.50" r="3" fill="#1f77b4"/>
<circle cx="882.04" cy="304.50" r="3" fill="#1f77b4"/>
<circle cx="891.96" cy="304.50" r="3" fill="#1f77b4"/>
<circle cx="901.88" cy="304.50" r="3" fill="#1f77b4"/>
<circle cx="911.80" cy="304.50" r="3" fill="#1f77b4"/>
<circle cx="921.72" cy="304.50" r="3" fill="#1f77b4"/>
<circle cx="931.64" cy="304.50" r="3" fill="#1f77b4"/>
<circle cx="941.56" cy="304.50" r="3" fill="#1f77b4"/>
<circle cx="951.48" cy="304.50" r="3" fill="#1f77b4"/>
<circle cx="961.40" cy="304.50" r="3" fill="#1f77b4"/>
<circle cx="971.32" cy="242.10" r="3" fill="#1f77b4"/>
<circle cx="981.24" cy="398.10" r="3" fill="#1f77b4"/>
<circle cx="991.16" cy="398.10" r="3" fill="#1f77b4"/>
<circle cx="1001.08" cy="398.10" r="3" fill="#1f77b4"/>
<circle cx="1011.00" cy="398.10" r="3" fill="#1f77b4"/>
<circle cx="1020.92" cy="398.10" r="3" fill="#1f77b4"/>
<circle cx="1030.84" cy="398.10" r="3" fill="#1f77b4"/>
<circle cx="1040.76" cy="398.10" r="3" fill="#1f77b4"/>
<circle cx="1050.68" cy="398.10" r="3" fill="#1f77b4"/>
<circle cx="1060.60" cy="398.10" r="3" fill="#1f77b4"/>
<circle cx="1070.52" cy="398.10" r="3" fill="#1f77b4"/>
<circle cx="1080.44" cy="398.10" r="3" fill="#1f77b4"/>
<circle cx="1090.36" cy="398.10" r="3" fill="#1f77b4"/>
<circle cx="1100.28" cy="398.10" r="3" fill="#1f77b4"/>
<circle cx="1110.20" cy="398.10" r="3" fill="#1f77b4"/>
<circle cx="1120.12" cy="398.10" r="3" fill="#1f77b4"/>
<circle cx="1130.04" cy="398.10" r="3" fill="#1f77b4"/>
<circle cx="1139.96" cy="398.10" r="3" fill="#1f77b4"/>
<circle cx="1149.88" cy="398.10" r="3" fill="#1f77b4"/>
<circle cx="1159.80" cy="398.10" r="3" fill="#1f77b4"/>
<circle cx="1169.72" cy="398.10" r="3" fill="#1f77b4"/>
<circle cx="1179.64" cy="398.10" r="3" fill="#1f77b4"/>
<circle cx="1189.56" cy="398.10" r="3" fill="#1f77b4"/>
<circle cx="1199.48" cy="398.10" r="3" fill="#1f77b4"/>
<circle cx="1209.40" cy="398.10" r="3" fill="#1f77b4"/>
<circle cx="1219.32" cy="398.10" r="3" fill="#1f77b4"/>
<circle cx="1229.24" cy="398.10" r="3" fill="#1f77b4"/>
<text transform="translate(22,320.3) rotate(-90)" text-anchor="middle" font-size="11" fill="#666">Кількість</text>
<text x="981" y="479" text-anchor="middle" font-size="10" fill="#666">Дата</text>
<rect x="849.5" y="222" width="38.5" height="13" fill="#1f77b4"/>
<text x="893" y="232.3" font-size="11" letter-spacing="-0.12" fill="#666">[E-COM06] Corner Desk Right Si...</text>
</svg>
<div class="r" style="left:9px;top:485px;width:1155px;height:42px;background:#f8f9fa;"></div>
<div class="r" style="left:669px;top:653px;width:495px;height:84px;background:#f3cbcd;"></div>
<div class="r" style="left:9px;top:737px;width:660px;height:48px;background:#dee2e6;"></div>
<div class="r" style="left:9px;top:485px;width:1155px;height:1px;background:#dedfe1;"></div>
<div class="r" style="left:9px;top:527px;width:1155px;height:1px;background:#dedfe1;"></div>
<div class="r" style="left:9px;top:569px;width:1155px;height:1px;background:#dedfe1;"></div>
<div class="r" style="left:9px;top:611px;width:1155px;height:1px;background:#dedfe1;"></div>
<div class="r" style="left:9px;top:653px;width:1155px;height:1px;background:#dedfe1;"></div>
<div class="r" style="left:9px;top:695px;width:1155px;height:1px;background:#dedfe1;"></div>
<div class="r" style="left:9px;top:737px;width:1155px;height:1px;background:#dedfe1;"></div>
<div class="r" style="left:670px;top:695px;width:494px;height:1px;background:#efdcde;"></div>
<div class="r" style="left:9px;top:485px;width:1px;height:252px;background:#dedfe1;"></div>
<div class="r" style="left:275px;top:485px;width:1px;height:252px;background:#dedfe1;"></div>
<div class="r" style="left:521px;top:485px;width:1px;height:252px;background:#dedfe1;"></div>
<div class="r" style="left:669px;top:485px;width:1px;height:252px;background:#dedfe1;"></div>
<div class="r" style="left:804px;top:485px;width:1px;height:252px;background:#dedfe1;"></div>
<div class="r" style="left:1164px;top:485px;width:1px;height:252px;background:#dedfe1;"></div>
<div class="t" style="top:499.50px;font-size:14px;line-height:14px;color:#33373b;left:20.20px;">Replenishment</div>
<div class="t" style="top:499.50px;font-size:14px;line-height:14px;color:#33373b;left:286.20px;">Expected Receipt</div>
<div class="t" style="top:499.50px;font-size:14px;line-height:14px;color:#33373b;letter-spacing:0.35px;right:516.00px;">Quantity</div>
<div class="t" style="top:499.50px;font-size:14px;line-height:14px;color:#33373b;letter-spacing:-0.45px;left:680.20px;">Used by</div>
<div class="t" style="top:499.50px;font-size:14px;line-height:14px;color:#33373b;left:815.20px;">Expected Delivery</div>
<div class="t" style="top:541.30px;font-size:14px;line-height:14px;color:#33373b;letter-spacing:0.1px;left:20.20px;">Inventory On Hand</div>
<div class="t" style="top:541.30px;font-size:14px;line-height:14px;color:#33373b;right:516.00px;">1.0</div>
<div class="t" style="top:541.64px;font-size:13.6px;line-height:13.6px;color:#1f6fd0;font-weight:bold;letter-spacing:0.45px;left:680.40px;">S00039</div>
<div class="t" style="top:541.30px;font-size:14px;line-height:14px;color:#33373b;letter-spacing:0.05px;left:815.40px;">Oct 12, 2020, 2:26:26 PM</div>
<div class="t" style="top:583.30px;font-size:14px;line-height:14px;color:#33373b;letter-spacing:0.1px;left:20.20px;">Inventory On Hand</div>
<div class="t" style="top:583.30px;font-size:14px;line-height:14px;color:#33373b;right:516.00px;">1.0</div>
<div class="t" style="top:583.64px;font-size:13.6px;line-height:13.6px;color:#1f6fd0;font-weight:bold;letter-spacing:0.45px;left:680.40px;">S00043</div>
<div class="t" style="top:583.30px;font-size:14px;line-height:14px;color:#33373b;letter-spacing:0.05px;left:815.40px;">Oct 13, 2020, 1:08:02 PM</div>
<div class="t" style="top:625.30px;font-size:14px;line-height:14px;color:#33373b;letter-spacing:0.1px;left:20.20px;">Inventory On Hand</div>
<div class="t" style="top:625.30px;font-size:14px;line-height:14px;color:#33373b;right:516.00px;">1.0</div>
<div class="t" style="top:625.64px;font-size:13.6px;line-height:13.6px;color:#1f6fd0;font-weight:bold;letter-spacing:0.45px;left:680.40px;">S00042</div>
<div class="t" style="top:625.30px;font-size:14px;line-height:14px;color:#33373b;letter-spacing:0.05px;left:815.40px;">Oct 13, 2020, 12:07:06 PM</div>
<div class="t" style="top:667.30px;font-size:14px;line-height:14px;color:#6c757d;letter-spacing:0.25px;left:20.20px;">Not Available</div>
<div class="t" style="top:667.30px;font-size:14px;line-height:14px;color:#33373b;right:516.00px;">- 1.0</div>
<div class="t" style="top:667.64px;font-size:13.6px;line-height:13.6px;color:#1f6fd0;font-weight:bold;letter-spacing:0.45px;left:680.40px;">S00042</div>
<div class="t" style="top:667.30px;font-size:14px;line-height:14px;color:#33373b;letter-spacing:0.05px;left:815.40px;">Oct 13, 2020, 12:07:06 PM</div>
<div class="t" style="top:709.30px;font-size:14px;line-height:14px;color:#6c757d;letter-spacing:0.25px;left:20.20px;">Not Available</div>
<div class="t" style="top:709.30px;font-size:14px;line-height:14px;color:#33373b;right:516.00px;">- 2.0</div>
<div class="t" style="top:709.64px;font-size:13.6px;line-height:13.6px;color:#1f6fd0;font-weight:bold;letter-spacing:0.45px;left:680.40px;">S00044</div>
<div class="t" style="top:709.30px;font-size:14px;line-height:14px;color:#33373b;letter-spacing:0.05px;left:815.40px;">Oct 13, 2020, 12:44:49 PM</div>
<div class="t" style="top:751.30px;font-size:14px;line-height:14px;color:#33373b;left:20.20px;">Forecasted Inventory</div>
<div class="t" style="top:751.30px;font-size:14px;line-height:14px;color:#33373b;right:516.00px;">-3.0</div>
</body></html>
